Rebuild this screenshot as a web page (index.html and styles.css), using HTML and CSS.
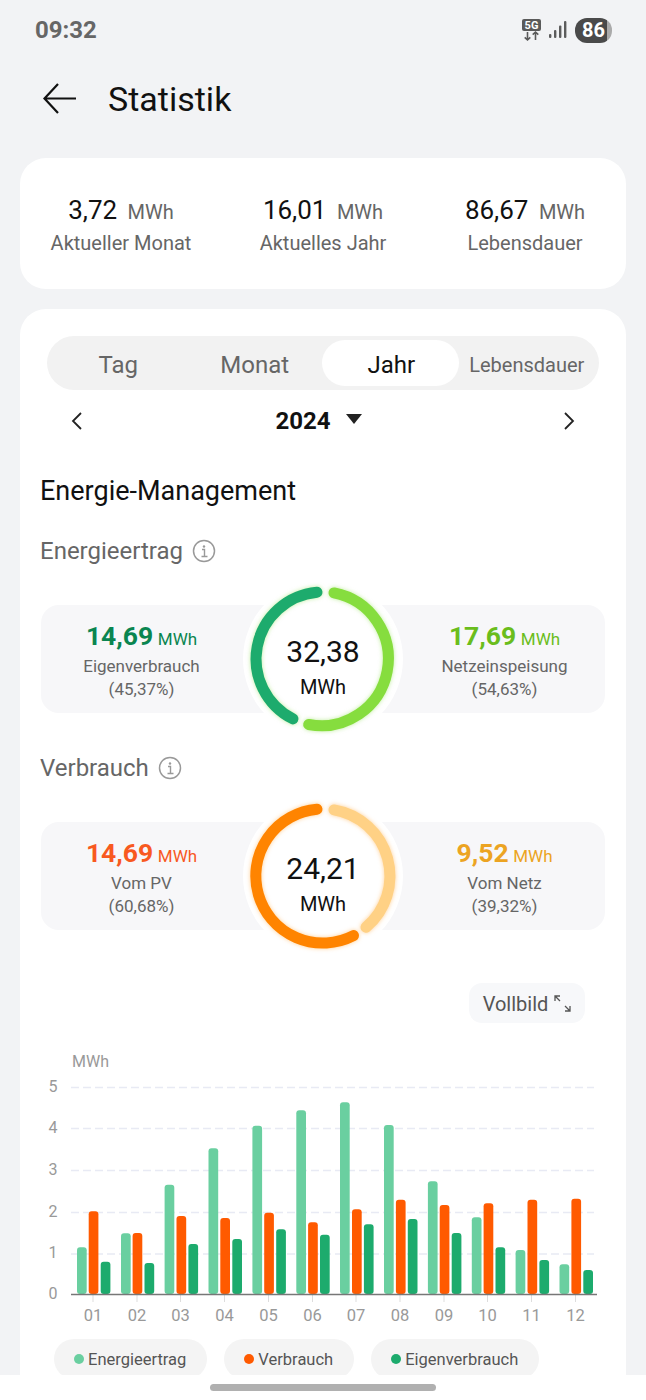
FILE: index.html
```html
<!DOCTYPE html>
<html lang="de">
<head>
  <meta charset="UTF-8">
  <meta name="viewport" content="width=device-width, initial-scale=1.0">
  <title>Statistik</title>
  <link rel="stylesheet" href="styles.css">
</head>
<body>

<div class="screen">
  <div class="status-bar">
    <div class="clock">09:32</div>
    <div class="status-icons">
      <svg class="net-icon" width="24" height="24" viewBox="0 0 24 24">
        <rect x="1" y="1" width="19" height="12" rx="2" fill="#5a5a5a"/>
        <text x="10.500" y="11" text-anchor="middle" class="net-text">5G</text>
        <path d="M6.500 14v8M3.700 19.300 6.500 22l2.800-2.700M14.500 22v-8M11.700 16.700 14.500 14l2.800 2.700" fill="none" stroke="#5a5a5a" stroke-width="1.600"/>
      </svg>
      <svg class="signal-icon" width="20" height="20" viewBox="0 0 20 20">
        <rect x="1" y="14" width="2.400" height="4" rx="1" fill="#5c5c5c"/>
        <rect x="6" y="10" width="2.400" height="8" rx="1" fill="#5c5c5c"/>
        <rect x="11" y="5.500" width="2.400" height="12.500" rx="1" fill="#5c5c5c"/>
        <rect x="16" y="1" width="2.400" height="17" rx="1" fill="#5c5c5c"/>
      </svg>
      <div class="battery">86</div>
    </div>
  </div>

  <div class="header">
    <svg class="back" width="36" height="32" viewBox="0 0 36 32">
      <path d="M34 15.500H3M16 1 2.500 15.500 16 30" fill="none" stroke="#111" stroke-width="2.200"/>
    </svg>
    <h1>Statistik</h1>
  </div>

  <div class="card summary">
    <div class="summary-item">
      <div class="summary-value">3,72 <span>MWh</span></div>
      <div class="summary-label">Aktueller Monat</div>
    </div>
    <div class="summary-item">
      <div class="summary-value">16,01 <span>MWh</span></div>
      <div class="summary-label">Aktuelles Jahr</div>
    </div>
    <div class="summary-item">
      <div class="summary-value">86,67 <span>MWh</span></div>
      <div class="summary-label">Lebensdauer</div>
    </div>
  </div>

  <div class="card main">
    <div class="tabs">
      <div class="tab">Tag</div>
      <div class="tab">Monat</div>
      <div class="tab active">Jahr</div>
      <div class="tab small">Lebensdauer</div>
    </div>

    <div class="year-row">
      <svg width="12" height="20" viewBox="0 0 12 20"><path d="M10 2 2 10l8 8" fill="none" stroke="#222" stroke-width="1.800"/></svg>
      <div class="year">2024 <i class="caret"></i></div>
      <svg width="12" height="20" viewBox="0 0 12 20"><path d="m2 2 8 8-8 8" fill="none" stroke="#222" stroke-width="1.800"/></svg>
    </div>

    <h2>Energie-Management</h2>

    <div class="section-title">
      Energieertrag
      <svg class="info" width="24" height="24" viewBox="0 0 24 24">
        <circle cx="12" cy="12" r="10.500" fill="none" stroke="#999" stroke-width="1.500"/>
        <circle cx="12" cy="7.500" r="1.200" fill="#999"/>
        <path d="M10 10.500h2.500v7M9.500 17.500h6" fill="none" stroke="#999" stroke-width="1.400"/>
      </svg>
    </div>
    <div class="energy-row">
      <div class="energy-side">
        <div class="energy-value dark-green">14,69 <span>MWh</span></div>
        <div class="energy-label">Eigenverbrauch</div>
        <div class="energy-label">(45,37%)</div>
      </div>
      <div class="ring">
        <svg width="160" height="160" viewBox="0 0 160 160">
          <path class="arc glow-green" d="M50 139.900A67 67 0 0 1 74 13.300" stroke="#1dab6d"/>
          <path class="arc glow-green" d="M91 13.900A67 67 0 1 1 65.700 145.500" stroke="#86dd3e"/>
        </svg>
        <div class="ring-text">
          <div class="ring-value">32,38</div>
          <div class="ring-unit">MWh</div>
        </div>
      </div>
      <div class="energy-side">
        <div class="energy-value light-green">17,69 <span>MWh</span></div>
        <div class="energy-label">Netzeinspeisung</div>
        <div class="energy-label">(54,63%)</div>
      </div>
    </div>

    <div class="section-title second">
      Verbrauch
      <svg class="info" width="24" height="24" viewBox="0 0 24 24">
        <circle cx="12" cy="12" r="10.500" fill="none" stroke="#999" stroke-width="1.500"/>
        <circle cx="12" cy="7.500" r="1.200" fill="#999"/>
        <path d="M10 10.500h2.500v7M9.500 17.500h6" fill="none" stroke="#999" stroke-width="1.400"/>
      </svg>
    </div>
    <div class="energy-row">
      <div class="energy-side">
        <div class="energy-value red-orange">14,69 <span>MWh</span></div>
        <div class="energy-label">Vom PV</div>
        <div class="energy-label">(60,68%)</div>
      </div>
      <div class="ring">
        <svg width="160" height="160" viewBox="0 0 160 160">
          <path class="arc glow-orange" d="M91 13.900A67 67 0 0 1 123 131.300" stroke="#ffd185"/>
          <path class="arc glow-orange" d="M110.500 139.600A67 67 0 1 1 74 13.300" stroke="#ff8400"/>
        </svg>
        <div class="ring-text">
          <div class="ring-value">24,21</div>
          <div class="ring-unit">MWh</div>
        </div>
      </div>
      <div class="energy-side">
        <div class="energy-value amber">9,52 <span>MWh</span></div>
        <div class="energy-label">Vom Netz</div>
        <div class="energy-label">(39,32%)</div>
      </div>
    </div>

    <div class="full-row">
      <div class="full-btn">
        Vollbild
        <svg width="17" height="17" viewBox="0 0 17 17">
          <path d="M1 6V1h5M1 1l5 5M16 11v5h-5M16 16l-5-5" fill="none" stroke="#555" stroke-width="1.300"/>
        </svg>
      </div>
    </div>

    <svg class="chart" width="566" height="286" viewBox="0 0 566 286">
      <text x="32" y="27" class="axis-unit">MWh</text>
      <g class="grid">
        <path d="M31 47.500H554M31 88.500H554M31 130.500H554M31 172.500H554M31 214H554"/>
      </g>
      <g class="axis-y" text-anchor="middle">
        <text x="13" y="52">5</text>
        <text x="13" y="93">4</text>
        <text x="13" y="135">3</text>
        <text x="13" y="177">2</text>
        <text x="13" y="218">1</text>
        <text x="13" y="259">0</text>
      </g>
      <path d="M53 254v8M97 254v8M140.500 254v8M184.500 254v8M228.500 254v8M272.500 254v8M316 254v8M360 254v8M404 254v8M447.500 254v8M491.500 254v8M535.500 254v8" stroke="#ddd" stroke-width="1"/>
      <g fill="#6acfa0">
        <rect x="37" y="207.300" width="9.700" height="46.700" rx="3"/>
        <rect x="81" y="193.300" width="9.700" height="60.700" rx="3"/>
        <rect x="124.600" y="144.700" width="9.700" height="109.300" rx="3"/>
        <rect x="168.500" y="108.300" width="9.700" height="145.700" rx="3"/>
        <rect x="212.400" y="85.700" width="9.700" height="168.300" rx="3"/>
        <rect x="256.300" y="70.300" width="9.700" height="183.700" rx="3"/>
        <rect x="300" y="62.300" width="9.700" height="191.700" rx="3"/>
        <rect x="344" y="85" width="9.700" height="169" rx="3"/>
        <rect x="387.900" y="141.300" width="9.700" height="112.700" rx="3"/>
        <rect x="431.800" y="177.300" width="9.700" height="76.700" rx="3"/>
        <rect x="475.600" y="210" width="9.700" height="44" rx="3"/>
        <rect x="519.500" y="224.300" width="9.700" height="29.700" rx="3"/>
      </g>
      <g fill="#ff5a00">
        <rect x="48.700" y="171.300" width="9.700" height="82.700" rx="3"/>
        <rect x="92.600" y="193" width="9.700" height="61" rx="3"/>
        <rect x="136.500" y="176" width="9.700" height="78" rx="3"/>
        <rect x="180.300" y="178" width="9.700" height="76" rx="3"/>
        <rect x="224.200" y="172.700" width="9.700" height="81.300" rx="3"/>
        <rect x="268.100" y="182.300" width="9.700" height="71.700" rx="3"/>
        <rect x="312" y="169.300" width="9.700" height="84.700" rx="3"/>
        <rect x="355.900" y="159.700" width="9.700" height="94.300" rx="3"/>
        <rect x="399.700" y="165" width="9.700" height="89" rx="3"/>
        <rect x="443.600" y="163.300" width="9.700" height="90.700" rx="3"/>
        <rect x="487.500" y="159.700" width="9.700" height="94.300" rx="3"/>
        <rect x="531.400" y="158.700" width="9.700" height="95.300" rx="3"/>
      </g>
      <g fill="#1dab6d">
        <rect x="60.700" y="221.700" width="9.700" height="32.300" rx="3"/>
        <rect x="104.500" y="223" width="9.700" height="31" rx="3"/>
        <rect x="148.400" y="204" width="9.700" height="50" rx="3"/>
        <rect x="192.300" y="199" width="9.700" height="55" rx="3"/>
        <rect x="236.200" y="189.300" width="9.700" height="64.700" rx="3"/>
        <rect x="280" y="194.700" width="9.700" height="59.300" rx="3"/>
        <rect x="323.900" y="184.300" width="9.700" height="69.700" rx="3"/>
        <rect x="367.800" y="179" width="9.700" height="75" rx="3"/>
        <rect x="411.700" y="193" width="9.700" height="61" rx="3"/>
        <rect x="455.500" y="207.300" width="9.700" height="46.700" rx="3"/>
        <rect x="499.400" y="220" width="9.700" height="34" rx="3"/>
        <rect x="543.300" y="230" width="9.700" height="24" rx="3"/>
      </g>
      <path d="M31 254.500H557" stroke="#777" stroke-width="1.500"/>
      <g class="axis-x" text-anchor="middle">
        <text x="53" y="281">01</text>
        <text x="97" y="281">02</text>
        <text x="140.500" y="281">03</text>
        <text x="184.500" y="281">04</text>
        <text x="228.500" y="281">05</text>
        <text x="272.500" y="281">06</text>
        <text x="316" y="281">07</text>
        <text x="360" y="281">08</text>
        <text x="404" y="281">09</text>
        <text x="447.500" y="281">10</text>
        <text x="491.500" y="281">11</text>
        <text x="535.500" y="281">12</text>
      </g>
    </svg>

    <div class="legend">
      <div class="legend-item"><i class="dot light"></i>Energieertrag</div>
      <div class="legend-item"><i class="dot orange"></i>Verbrauch</div>
      <div class="legend-item"><i class="dot green"></i>Eigenverbrauch</div>
    </div>
  </div>

  <div class="nav-bar"><div class="nav-pill"></div></div>
</div>

</body>
</html>
```

FILE: styles.css
```css
body {
  margin: 0;
  background-color: #f2f3f5;
  font-family: Roboto, "Liberation Sans", sans-serif;
  color: #111;
}

.screen {
  position: relative;
  width: 646px;
  height: 1400px;
  overflow: hidden;
}

.status-bar {
  height: 60px;
  padding: 0 34px 0 35px;
  display: flex;
  justify-content: space-between;
  align-items: center;
  box-sizing: border-box;
}

.clock {
  font-size: 24px;
  font-weight: bold;
  color: #666;
}

.status-icons {
  display: flex;
  align-items: center;
  gap: 6px;
}

.net-icon {
  margin-right: -3px;
}

.signal-icon {
  margin-right: 1px;
}

.net-text {
  font-size: 11px;
  font-weight: bold;
  fill: #fff;
}

.battery {
  width: 37px;
  height: 25px;
  border-radius: 12px;
  background: linear-gradient(90deg, #4a4a4a 86%, #aaa 86%);
  color: #fff;
  font-size: 20px;
  font-weight: bold;
  line-height: 25px;
  text-align: center;
}

.header {
  height: 78px;
  padding-left: 42px;
  display: flex;
  align-items: center;
  gap: 30px;
  margin-bottom: 20px;
}

h1 {
  margin: 0;
  font-size: 34px;
  font-weight: 400;
}

.card {
  background-color: #fff;
  border-radius: 26px;
  margin: 0 20px 20px;
}

.summary {
  height: 131px;
  display: grid;
  grid-template-columns: repeat(3, 1fr);
  align-items: center;
  text-align: center;
}

.summary-item {
  padding-top: 2px;
}

.summary-value {
  font-size: 26px;
  line-height: 34px;
}

.summary-value span {
  font-size: 20px;
  color: #666;
  margin-left: 4px;
}

.summary-label {
  font-size: 20px;
  line-height: 28px;
  color: #666;
}

.main {
  padding: 27px 21px 40px;
}

.tabs {
  display: grid;
  grid-template-columns: repeat(4, 1fr);
  margin: 0 6px;
  padding: 4px 4px 4px 2px;
  background-color: #f2f2f2;
  border-radius: 27px;
}

.tab {
  height: 46px;
  line-height: 50px;
  text-align: center;
  text-indent: 2px;
  font-size: 24px;
  color: #666;
  border-radius: 23px;
}

.tab.active {
  background-color: #fff;
  color: #111;
}

.tab.small {
  font-size: 20px;
  text-indent: 0;
}

.year-row {
  height: 60px;
  margin-top: 1px;
  padding: 0 30px;
  display: flex;
  justify-content: space-between;
  align-items: center;
}

.year {
  font-size: 24px;
  font-weight: bold;
  display: flex;
  align-items: center;
  gap: 15px;
  margin-left: -9px;
}

.caret {
  width: 0;
  height: 0;
  border-left: 8px solid transparent;
  border-right: 8px solid transparent;
  border-top: 10px solid #222;
  margin-top: -4px;
}

h2 {
  margin: 20px 0 0 -1px;
  font-size: 27px;
  line-height: 40px;
  font-weight: 400;
}

.section-title {
  display: flex;
  align-items: center;
  gap: 9px;
  font-size: 24px;
  color: #666;
  height: 40px;
  margin: 20px 0 0 -1px;
}

.section-title.second {
  margin-top: 35px;
}

.energy-row {
  height: 108px;
  margin-top: 34px;
  background-color: #f7f7f9;
  border-radius: 18px;
  display: flex;
  align-items: center;
  justify-content: space-between;
}

.energy-side {
  width: 201px;
  padding-top: 3px;
  text-align: center;
}

.energy-value {
  font-size: 26.500px;
  font-weight: bold;
  line-height: 32px;
}

.energy-value span {
  font-size: 17px;
  font-weight: 400;
  margin-left: -2px;
}

.energy-label {
  font-size: 17px;
  line-height: 23px;
  color: #666;
}

.dark-green { color: #0a8550; }
.light-green { color: #6abd1c; }
.red-orange { color: #f8591f; }
.amber { color: #eca422; }

.ring {
  position: relative;
  width: 160px;
  height: 160px;
  border-radius: 50%;
  background-color: #fff;
}

.arc {
  fill: none;
  stroke-width: 11;
  stroke-linecap: round;
}

.glow-green { filter: drop-shadow(0 0 2px rgba(131, 220, 64, 0.5)); }
.glow-orange { filter: drop-shadow(0 0 2px rgba(255, 160, 40, 0.5)); }

.ring-text {
  position: absolute;
  inset: 0;
  padding-top: 16px;
  box-sizing: border-box;
  display: flex;
  flex-direction: column;
  align-items: center;
  justify-content: center;
}

.ring-value {
  font-size: 30px;
  line-height: 40px;
}

.ring-unit {
  font-size: 20px;
  line-height: 30px;
}

.full-row {
  margin-top: 53px;
  display: flex;
  justify-content: flex-end;
  padding-right: 20px;
}

.full-btn {
  height: 40px;
  width: 116px;
  padding-top: 2px;
  box-sizing: border-box;
  background-color: #f7f8fa;
  border-radius: 13px;
  font-size: 20px;
  color: #555;
  display: flex;
  align-items: center;
  justify-content: center;
  gap: 6px;
}

.full-btn svg {
  margin-top: -2px;
}

.chart {
  display: block;
  margin: 17px 0 0 -1px;
  font-family: Roboto, sans-serif;
}

.axis-unit {
  font-size: 16px;
  fill: #999;
}

.grid path {
  stroke: #e8eaf4;
  stroke-width: 1.500;
  stroke-dasharray: 8 4;
  fill: none;
}

.axis-y text {
  font-size: 16px;
  fill: #999;
}

.axis-x text {
  font-size: 16.500px;
  fill: #999;
}

.legend {
  margin: 13px 0 0 13px;
  display: flex;
  gap: 17px;
}

.legend-item {
  height: 40px;
  padding: 0 21px 0 20px;
  background-color: #f4f4f4;
  border-radius: 20px;
  font-size: 16.500px;
  color: #555;
  display: flex;
  align-items: center;
  gap: 4px;
}

.dot {
  width: 10px;
  height: 10px;
  border-radius: 50%;
}

.dot.light { background-color: #6acfa0; }
.dot.orange { background-color: #ff5a00; }
.dot.green { background-color: #1dab6d; }

.nav-bar {
  position: absolute;
  left: 0;
  right: 0;
  bottom: 0;
  height: 25px;
  background-color: #fff;
  display: flex;
  justify-content: center;
  padding-top: 9px;
  box-sizing: border-box;
}

.nav-pill {
  width: 226px;
  height: 7px;
  border-radius: 4px;
  background-color: #b0b0b0;
}
```
